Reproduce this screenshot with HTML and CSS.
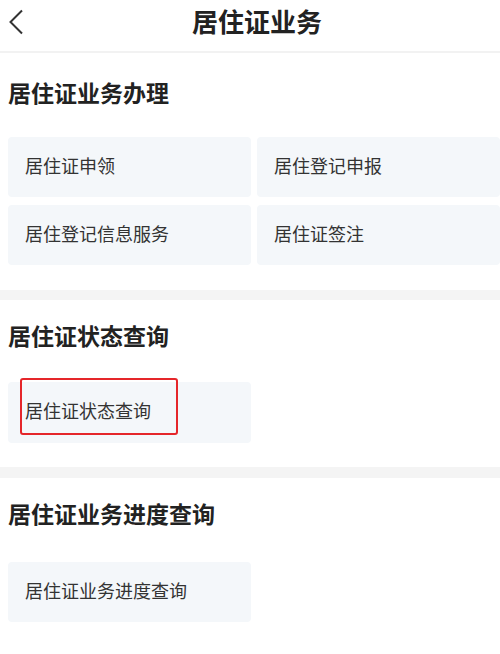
FILE: index.html
```html
<!DOCTYPE html>
<html>
<head>
    <meta charset="utf-8">
    <title>居住证业务</title>
    <link rel="stylesheet" href="styles.css">
</head>
<body>
    <div class="header">
        <span class="back">
            <svg width="16" height="26" viewBox="0 0 16 26"><path d="M14 1.5 L2.5 13 L14 24.5" fill="none" stroke="#333" stroke-width="2"/></svg>
        </span>
        <h1>居住证业务</h1>
    </div>

    <div class="section first">
        <h2>居住证业务办理</h2>
        <div class="grid">
            <div class="tile">居住证申领</div>
            <div class="tile">居住登记申报</div>
            <div class="tile">居住登记信息服务</div>
            <div class="tile">居住证签注</div>
        </div>
    </div>

    <div class="divider"></div>

    <div class="section">
        <h2>居住证状态查询</h2>
        <div class="grid">
            <div class="tile marked">居住证状态查询<span class="mark"></span></div>
        </div>
    </div>

    <div class="divider thick"></div>

    <div class="section last">
        <h2>居住证业务进度查询</h2>
        <div class="grid">
            <div class="tile">居住证业务进度查询</div>
        </div>
    </div>
</body>
</html>
```

FILE: styles.css
```css
body { margin: 0; background: #fff; font-family: "Noto Sans CJK SC", "Noto Sans", sans-serif; color: #333; }

.header { height: 51px; border-bottom: 2px solid #f2f2f2; display: flex; align-items: center; justify-content: center; position: relative; }
.header h1 { margin: 0; font-size: 26px; font-weight: bold; color: #222; line-height: 30px; margin-top: -10px; padding-left: 14px; }
.back { position: absolute; left: 8px; top: 9px; }

.section { padding: 23px 0 24px 8px; }
.section.first { padding-top: 27px; padding-bottom: 25px; }
.section h2 { margin: -3px 0 32px 0; font-size: 23px; font-weight: bold; color: #222; line-height: 30px; }
.section.first h2 { margin-bottom: 30px; }
.section.last h2 { margin-bottom: 34px; }

.grid { display: grid; grid-template-columns: 1fr 1fr; gap: 8px 6px; }
.tile { height: 60px; box-sizing: border-box; background: #f4f7fa; border-radius: 4px; padding: 0 0 5px 17px; display: flex; align-items: center; font-size: 18px; color: #333; }
.marked { position: relative; height: 61px; }
.mark { position: absolute; left: 12px; top: -4px; width: 154px; height: 53px; border: 2px solid #e5262a; border-radius: 3px; }

.divider { height: 10px; background: #f4f4f4; }
.divider.thick { height: 11px; }
```
